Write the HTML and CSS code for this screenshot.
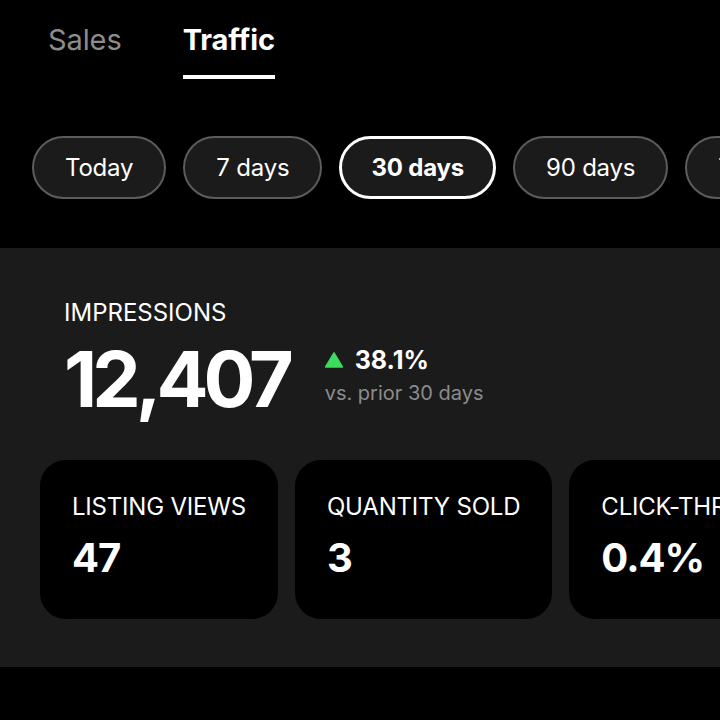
FILE: index.html
```html
<!DOCTYPE html>
<html lang="en">
<head>
  <meta charset="UTF-8">
  <meta name="viewport" content="width=device-width, initial-scale=1" />
  <title>Stats | Traffic</title>
  <link rel="stylesheet" href="styles.css">
</head>
<body>
  <nav class="tabs">
    <a class="tab" href="#">Sales</a>
    <a class="tab active" href="#">Traffic</a>
  </nav>

  <div class="ranges">
    <button class="pill">Today</button>
    <button class="pill">7 days</button>
    <button class="pill active">30 days</button>
    <button class="pill">90 days</button>
    <button class="pill">This year</button>
  </div>

  <section class="panel">
    <div class="headline">
      <div class="headline-label">IMPRESSIONS</div>
      <div class="headline-row">
        <div class="headline-value">12,407</div>
        <div class="change">
          <div class="change-up">
            <svg class="arrow" width="18" height="16" viewBox="0 0 18 16"><path d="M9 1 L17.5 15 L0.5 15 Z" fill="#3ddc5f" stroke="#3ddc5f" stroke-width="1.5" stroke-linejoin="round"/></svg>
            <span>38.1%</span>
          </div>
          <div class="change-note">vs. prior 30 days</div>
        </div>
      </div>
    </div>

    <div class="cards">
      <div class="card">
        <div class="card-label">LISTING VIEWS</div>
        <div class="card-value">47</div>
      </div>
      <div class="card">
        <div class="card-label">QUANTITY SOLD</div>
        <div class="card-value">3</div>
      </div>
      <div class="card">
        <div class="card-label">CLICK-THROUGH RATE</div>
        <div class="card-value">0.4%</div>
      </div>
    </div>
  </section>
</body>
</html>
```

FILE: styles.css
```css
body {
  margin: 0;
  background: #000;
  color: #fff;
  font-family: "Inter", "Liberation Sans", sans-serif;
  width: 720px;
  height: 720px;
  overflow: hidden;
}

.tabs {
  display: flex;
  gap: 61px;
  padding: 22px 48px 0;
}

.tab {
  font-size: 29px;
  color: #8c8c8c;
  text-decoration: none;
  padding-bottom: 18px;
  border-bottom: 4px solid transparent;
  letter-spacing: -0.1px;
}

.tab.active {
  color: #fff;
  font-weight: 700;
  border-bottom-color: #fff;
}

.ranges {
  display: flex;
  gap: 17px;
  padding-left: 32px;
  margin-top: 57px;
  overflow: hidden;
  white-space: nowrap;
}

.pill {
  flex: none;
  height: 63px;
  padding: 0 31px;
  border-radius: 32px;
  border: 2px solid #5c5c5c;
  background: #1b1b1b;
  color: #fff;
  font-family: inherit;
  font-size: 24px;
  letter-spacing: -0.2px;
}

.pill.active {
  border: 3px solid #fff;
  font-weight: 700;
  padding: 0 29px;
}

.panel {
  background: #1b1b1b;
  margin-top: 49px;
  height: 419px;
  padding: 50px 0 0 40px;
  box-sizing: border-box;
  overflow: hidden;
}

.headline {
  padding-left: 24px;
}

.headline-label {
  font-size: 24px;
}

.headline-row {
  display: flex;
  align-items: flex-start;
  gap: 36px;
  margin-top: 11px;
}

.headline-value {
  font-size: 77px;
  font-weight: 700;
  letter-spacing: -5px;
  line-height: 82px;
}

.change {
  padding-top: 7px;
}

.change-up {
  display: flex;
  align-items: center;
  gap: 12px;
  font-size: 25px;
  font-weight: 700;
}

.change-note {
  font-size: 20px;
  color: #8c8c8c;
  margin-top: 6px;
}

.cards {
  display: flex;
  gap: 17px;
  margin-top: 40px;
  white-space: nowrap;
}

.card {
  flex: none;
  background: #000;
  border-radius: 26px;
  height: 159px;
  padding: 32px 32px 0;
  box-sizing: border-box;
}

.card-label {
  font-size: 24px;
  letter-spacing: -0.2px;
}

.card-value {
  font-size: 40px;
  font-weight: 700;
  margin-top: 12px;
  letter-spacing: -1px;
}
```
